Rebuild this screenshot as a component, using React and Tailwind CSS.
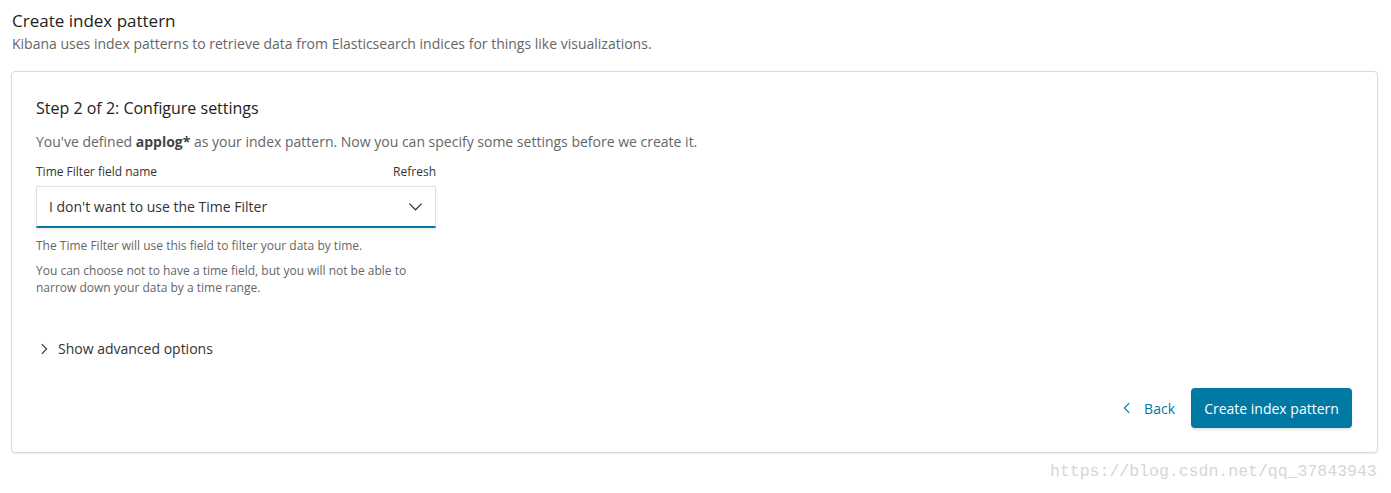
import React from 'react';

const ChevronDown = ({ className }) => (
  <svg className={className} viewBox="0 0 16 16" fill="none" stroke="currentColor" strokeWidth="1.3">
    <path d="M1.5 5l6.5 6.5 6.5-6.5" />
  </svg>
);

const ChevronRight = ({ className }) => (
  <svg className={className} viewBox="0 0 16 16" fill="none" stroke="currentColor" strokeWidth="1.5">
    <path d="M5 1.5l6.5 6.5-6.5 6.5" />
  </svg>
);

const ChevronLeft = ({ className }) => (
  <svg className={className} viewBox="0 0 16 16" fill="none" stroke="currentColor" strokeWidth="1.5">
    <path d="M11 1.5l-6.5 6.5 6.5 6.5" />
  </svg>
);

export default function App() {
  return (
    <div className="relative w-[1391px] h-[493px] bg-white font-['Open_Sans',sans-serif] text-[#333]">
      <div className="px-3 pt-[8px]">
        <h1 className="text-[17px] leading-[26px] text-[#222]">Create index pattern</h1>
        <p className="text-[14px] leading-[20px] text-[#666]">
          Kibana uses index patterns to retrieve data from Elasticsearch indices for things like visualizations.
        </p>
      </div>

      <div className="mx-[11px] mt-[17px] w-[1367px] h-[382px] border border-[#d9d9d9] rounded-[4px] shadow-[0_1px_2px_rgba(0,0,0,0.08)] px-6 pt-[25px] flex flex-col">
        <h2 className="text-[16px] leading-[22px] text-[#222]">Step 2 of 2: Configure settings</h2>
        <p className="mt-[13px] text-[14px] leading-[20px] text-[#666]">
          You've defined <span className="font-bold text-[#444]">applog*</span> as your index pattern. Now you can specify some settings before we create it.
        </p>

        <div className="mt-[12px] w-[400px]">
          <div className="flex justify-between text-[12px] leading-[16px] text-[#333]">
            <span>Time Filter field name</span>
            <span>Refresh</span>
          </div>
          <div className="mt-[6px] h-[42px] bg-white border border-[#e0e0e0] border-b-2 border-b-[#0079a5] shadow-[0_2px_3px_rgba(0,0,0,0.08)] flex items-center justify-between pl-3 pr-3">
            <span className="text-[14px] text-[#333]">I don't want to use the Time Filter</span>
            <ChevronDown className="w-[15px] h-[15px] text-[#333]" />
          </div>
          <p className="mt-[9px] text-[12px] leading-[17px] text-[#666]">
            The Time Filter will use this field to filter your data by time.
          </p>
          <p className="mt-[8px] text-[12px] leading-[17px] text-[#666]">
            You can choose not to have a time field, but you will not be able to narrow down your data by a time range.
          </p>
        </div>

        <div className="mt-[43px] flex items-center gap-[8px] pl-[2px]">
          <ChevronRight className="w-[12px] h-[12px] text-[#333]" />
          <span className="text-[14px] leading-[20px] text-[#333]">Show advanced options</span>
        </div>

        <div className="mt-[29px] flex justify-end items-center pr-[1px]">
          <button className="flex items-center gap-[11px] px-2 h-[40px] text-[14px] text-[#0079a5]">
            <ChevronLeft className="w-[12px] h-[12px]" />
            Back
          </button>
          <button className="ml-[8px] h-[40px] w-[161px] rounded-[4px] bg-[#0079a5] text-white text-[14px] shadow-[0_2px_2px_rgba(0,0,0,0.1)]">
            Create index pattern
          </button>
        </div>
      </div>

      <div className="absolute left-[1050px] top-[461px] font-['Liberation_Mono',monospace] text-[16.5px] leading-[22px] text-[#d6d6d6]">
        https://blog.csdn.net/qq_37843943
      </div>
    </div>
  );
}
